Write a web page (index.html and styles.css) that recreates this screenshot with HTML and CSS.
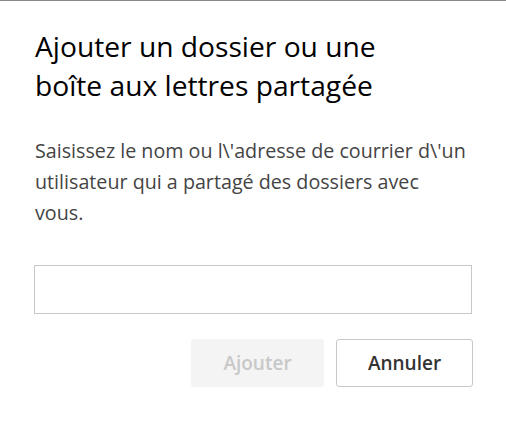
FILE: index.html
```html
<!DOCTYPE html>
<html lang="fr">
<head>
<meta charset="utf-8">
<link rel="stylesheet" href="styles.css">
</head>
<body>
<div class="topline"></div>
<div class="dialog">
  <h1 class="title">Ajouter un dossier ou une<br>boîte aux lettres partagée</h1>
  <p class="desc">Saisissez le nom ou l\'adresse de courrier d\'un<br>utilisateur qui a partagé des dossiers avec<br>vous.</p>
  <input class="field" type="text">
  <div class="actions">
    <button class="btn btn-primary" disabled>Ajouter</button>
    <button class="btn btn-default">Annuler</button>
  </div>
</div>
</body>
</html>
```
FILE: styles.css
```css
html, body {
  margin: 0;
  padding: 0;
  background: #ffffff;
}
body {
  width: 506px;
  height: 423px;
  overflow: hidden;
  font-family: "Open Sans", "Noto Sans", sans-serif;
}
.topline {
  height: 1px;
  background: #8a8a8a;
}
.dialog {
  padding: 26px 34px 0 35px;
  display: flex;
  flex-direction: column;
}
.title {
  margin: 0;
  font-size: 28.2px;
  line-height: 39px;
  font-weight: 400;
  color: #000000;
  white-space: nowrap;
}
.desc {
  margin: 30px 0 0 0;
  font-size: 19.7px;
  line-height: 31px;
  color: #444444;
  white-space: nowrap;
}
.field {
  margin: 37px 0 0 -1px;
  height: 49px;
  box-sizing: border-box;
  width: 438px;
  border: 1px solid #c8c8c8;
  border-radius: 0;
  background: #fff;
  outline: none;
}
.actions {
  display: flex;
  justify-content: flex-end;
  gap: 12px;
  margin-top: 25px;
  margin-right: -1px;
}
.btn {
  height: 48px;
  box-sizing: border-box;
  border-radius: 3px;
  font-family: "Open Sans", "Noto Sans", sans-serif;
  font-size: 19px;
  font-weight: 600;
  padding: 0;
}
.btn-primary {
  width: 133px;
  background: #f4f4f4;
  color: #c8c8c8;
  border: none;
}
.btn-default {
  width: 137px;
  background: #ffffff;
  color: #333333;
  border: 1px solid #c8c8c8;
}
```
